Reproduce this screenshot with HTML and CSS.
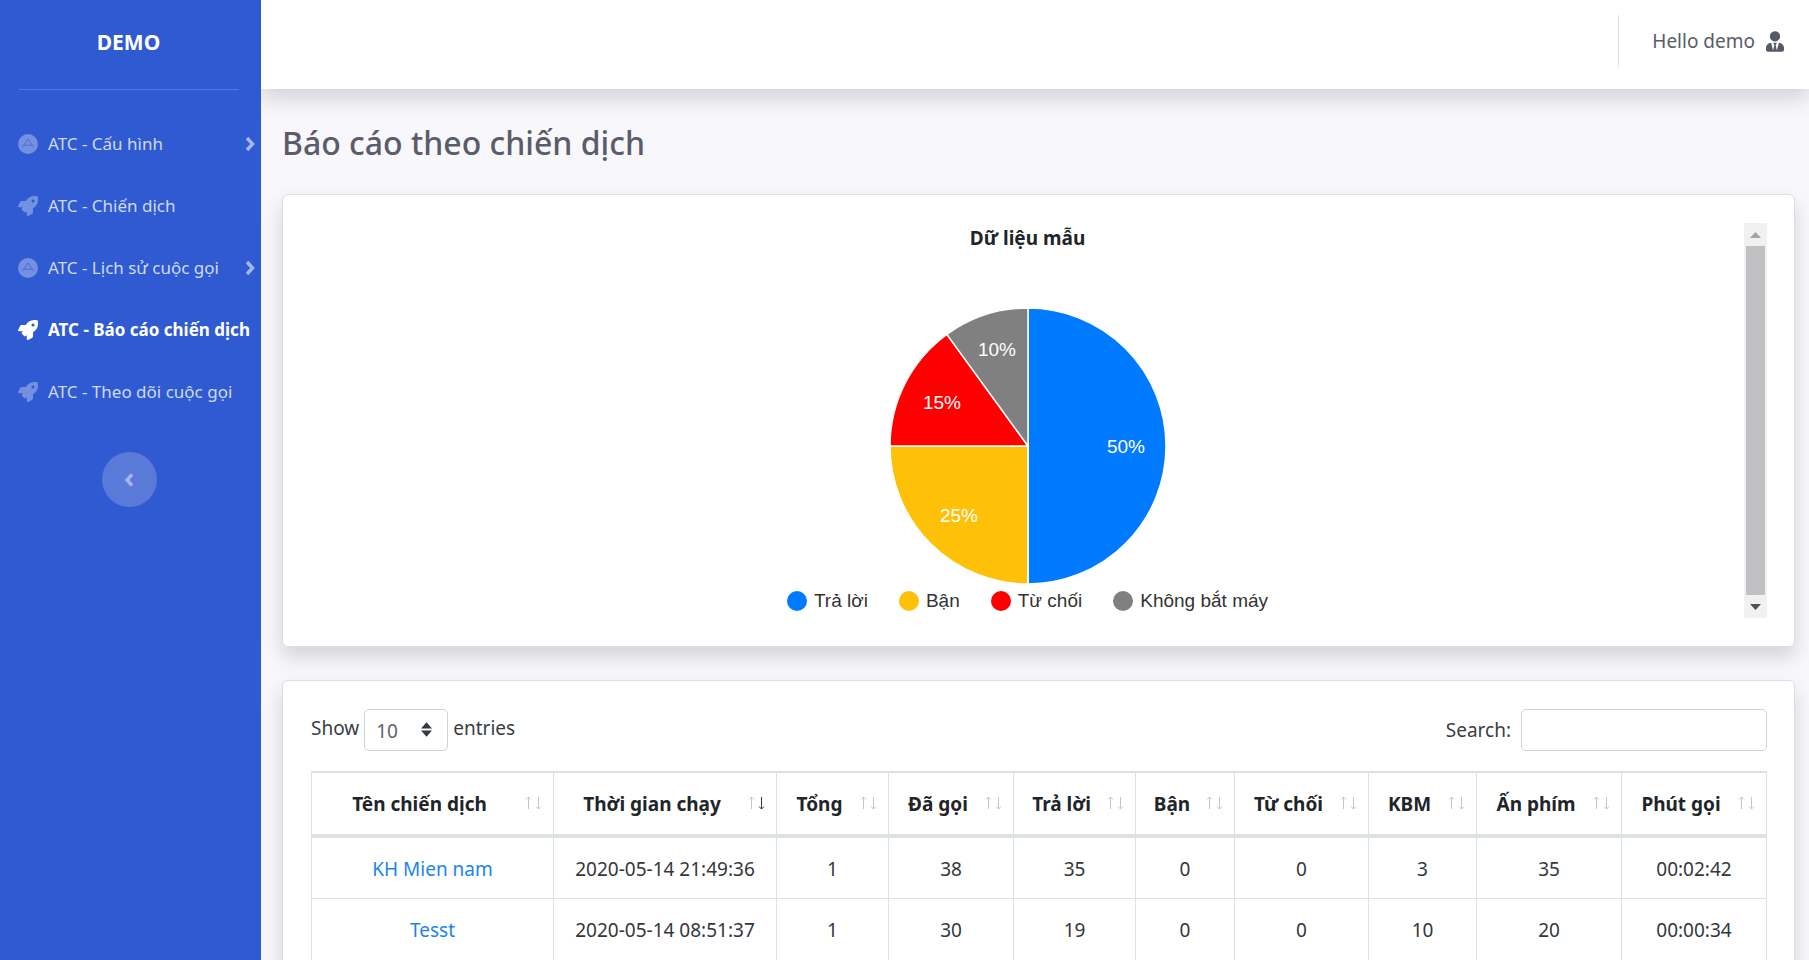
FILE: index.html
```html
<!DOCTYPE html>
<html lang="vi">
<head>
<meta charset="utf-8">
<meta name="viewport" content="width=device-width, initial-scale=1">
<title>Báo cáo theo chiến dịch</title>
<link rel="stylesheet" href="styles.css">
</head>
<body>
<svg class="sprite" aria-hidden="true">
  <symbol id="rocket" viewBox="0 0 512 512"><path d="M505.12 19.09c-1.19-5.53-6.66-11-12.21-12.19C460.72 0 435.51 0 410.41 0 307.18 0 245.27 55.2 199.05 128H94.84c-16.35.02-35.56 11.88-42.89 26.48L2.52 253.3A28.4 28.4 0 0 0 0 264a24 24 0 0 0 24 24h103.82l-22.48 22.47c-11.36 11.36-12.99 32.26 0 45.25l50.91 50.9c11.15 11.19 32.15 13.16 45.27 0L224 384.16V488a24 24 0 0 0 24 24 28.56 28.56 0 0 0 10.71-2.52l98.73-49.39c14.63-7.29 26.51-26.5 26.51-42.85V312.8C456.54 266.48 512 204.39 512 101.7c.08-25.2.08-50.4-6.88-82.61ZM384.04 168A40 40 0 1 1 424.05 128a40.02 40.02 0 0 1-40.01 40Z"/></symbol>
  <symbol id="circle-a" viewBox="0 0 20 20"><circle cx="10" cy="10" r="10"/><path d="M4 13.500 10 5l6 8.500M6 11.200h8" fill="none" stroke="#4a70d8" stroke-width="1"/></symbol>
  <symbol id="chevron-right" viewBox="0 0 10 16"><path d="m2 2 5.500 6L2 14" fill="none" stroke="currentColor" stroke-width="3.400"/></symbol>
  <symbol id="chevron-left" viewBox="0 0 10 16"><path d="M8 2.500 3 8l5 5.500" fill="none" stroke="currentColor" stroke-width="3.400"/></symbol>
  <symbol id="sort" viewBox="0 0 18 16"><g fill="none" stroke-width="1"><path d="M4.500 14V2M2 4.500 4.500 2 7 4.500"/><path stroke="currentColor" d="M14.500 2v12M12 11.500l2.500 2.500 2.500-2.500"/></g></symbol>
</svg>
<div class="layout">
  <aside class="sidebar">
    <a class="brand" href="#">DEMO</a>
    <hr class="rule">
    <nav class="menu">
      <a class="item" href="#"><svg class="icon"><use href="#circle-a"/></svg><span class="label">ATC - Cấu hình</span><svg class="chevron"><use href="#chevron-right"/></svg></a>
      <a class="item" href="#"><svg class="icon"><use href="#rocket"/></svg><span class="label">ATC - Chiến dịch</span></a>
      <a class="item" href="#"><svg class="icon"><use href="#circle-a"/></svg><span class="label">ATC - Lịch sử cuộc gọi</span><svg class="chevron"><use href="#chevron-right"/></svg></a>
      <a class="item active" href="#"><svg class="icon"><use href="#rocket"/></svg><span class="label">ATC - Báo cáo chiến dịch</span></a>
      <a class="item" href="#"><svg class="icon"><use href="#rocket"/></svg><span class="label">ATC - Theo dõi cuộc gọi</span></a>
    </nav>
    <button class="toggle" type="button" aria-label="Thu gọn"><svg class="chevron"><use href="#chevron-left"/></svg></button>
  </aside>
  <div class="page">
    <header class="topbar">
      <a class="user" href="#"><span>Hello demo</span>
        <svg class="user-icon" viewBox="0 0 448 512"><path d="M224 256c70.700 0 128-57.300 128-128S294.700 0 224 0 96 57.300 96 128s57.300 128 128 128zm95.800 32.600L272 480l-32-136 32-56h-96l32 56-32 136-47.800-191.400C56.900 292 0 350.300 0 422.400V464c0 26.500 21.500 48 48 48h352c26.500 0 48-21.500 48-48v-41.600c0-72.100-56.900-130.400-128.200-133.800z"/></svg>
      </a>
    </header>
    <main class="content">
      <h1 class="title">Báo cáo theo chiến dịch</h1>
      <section class="card chart-card">
        <figure class="chart">
          <figcaption class="chart-title">Dữ liệu mẫu</figcaption>
          <svg class="pie" viewBox="-138 -138 276 276" role="img" aria-label="Dữ liệu mẫu">
            <g stroke="#fff" stroke-width="1.500">
              <path fill="#007bff" d="M0 0V-138A138 138 0 0 1 0 138Z"/>
              <path fill="#ffc107" d="M0 0V138A138 138 0 0 1-138 0Z"/>
              <path fill="#f00" d="M0 0H-138A138 138 0 0 1-81.100-111.600Z"/>
              <path fill="#808080" d="M0 0-81.100-111.600A138 138 0 0 1 0-138Z"/>
            </g>
            <g class="pie-text">
              <text x="98" y="7">50%</text>
              <text x="-69" y="76">25%</text>
              <text x="-86" y="-37">15%</text>
              <text x="-31" y="-90">10%</text>
            </g>
          </svg>
          <ul class="legend">
            <li><i class="dot blue"></i>Trả lời</li>
            <li><i class="dot yellow"></i>Bận</li>
            <li><i class="dot red"></i>Từ chối</li>
            <li><i class="dot gray"></i>Không bắt máy</li>
          </ul>
        </figure>
        <div class="scrollbar" aria-hidden="true">
          <svg class="arrow" viewBox="0 0 23 23"><path fill="#a3a3a3" d="M6 15h11l-5.500-6z"/></svg>
          <div class="thumb"></div>
          <svg class="arrow" viewBox="0 0 23 23"><path fill="#505050" d="M6 9h11l-5.500 6z"/></svg>
        </div>
      </section>
      <section class="card table-card">
        <div class="controls">
          <div class="length">
            <label class="length-text" for="len">Show</label>
            <span class="select-wrap">
              <select id="len" class="field select"><option>10</option><option>25</option><option>50</option></select>
              <svg class="caret" viewBox="0 0 12 16"><path d="M6 0l6 7H0zM6 16l6-7H0z"/></svg>
            </span>
            <span class="length-text">entries</span>
          </div>
          <div class="search"><label for="q">Search:</label><input id="q" class="field input" type="search"></div>
        </div>
        <table class="table">
          <colgroup><col class="w-name"><col class="w-time"><col class="w-total"><col class="w-called"><col class="w-answer"><col class="w-busy"><col class="w-reject"><col class="w-kbm"><col class="w-press"><col class="w-min"></colgroup>
          <thead>
            <tr>
              <th>Tên chiến dịch<svg class="sort"><use href="#sort"/></svg></th>
              <th>Thời gian chạy<svg class="sort desc"><use href="#sort"/></svg></th>
              <th>Tổng<svg class="sort"><use href="#sort"/></svg></th>
              <th>Đã gọi<svg class="sort"><use href="#sort"/></svg></th>
              <th>Trả lời<svg class="sort"><use href="#sort"/></svg></th>
              <th>Bận<svg class="sort"><use href="#sort"/></svg></th>
              <th>Từ chối<svg class="sort"><use href="#sort"/></svg></th>
              <th>KBM<svg class="sort"><use href="#sort"/></svg></th>
              <th>Ấn phím<svg class="sort"><use href="#sort"/></svg></th>
              <th>Phút gọi<svg class="sort"><use href="#sort"/></svg></th>
            </tr>
          </thead>
          <tbody>
            <tr><td><a href="#">KH Mien nam</a></td><td>2020-05-14 21:49:36</td><td>1</td><td>38</td><td>35</td><td>0</td><td>0</td><td>3</td><td>35</td><td>00:02:42</td></tr>
            <tr><td><a href="#">Tesst</a></td><td>2020-05-14 08:51:37</td><td>1</td><td>30</td><td>19</td><td>0</td><td>0</td><td>10</td><td>20</td><td>00:00:34</td></tr>
          </tbody>
        </table>
      </section>
    </main>
  </div>
</div>
</body>
</html>
```
FILE: styles.css
```css
* { box-sizing: border-box; }
html { height: 100%; }
body {
  margin: 0;
  height: 100%;
  overflow: hidden;
  background: #f8f8fc;
  color: #212529;
  font: 19px/30px "Segoe UI", "Noto Sans", sans-serif;
}
a { color: inherit; text-decoration: none; }
.sprite { position: absolute; width: 0; height: 0; }
.layout { display: flex; height: 100%; }

.sidebar {
  display: flex;
  flex: 0 0 261px;
  flex-direction: column;
  background: #2f5ad1;
  color: #fff;
}
.brand {
  padding: 27px 4px 32px 0;
  text-align: center;
  font-size: 21px;
  font-weight: 700;
}
.rule { width: 220px; margin: 0 0 23px 19px; border: 0; border-top: 1px solid #5478db; }
.menu { display: flex; flex-direction: column; }
.item {
  display: flex;
  align-items: center;
  height: 62px;
  padding: 0 6px 0 18px;
  font-size: 17px;
  white-space: nowrap;
  color: #d0daf5;
}
.icon { flex: none; width: 20px; height: 20px; margin-right: 10px; fill: #7390e1; }
.active { color: #fff; font-weight: 700; }
.active .icon { fill: #fff; }
.chevron { width: 10px; height: 16px; color: #a6b8eb; }
.item .chevron { margin-left: auto; }
.toggle {
  display: grid;
  place-items: center;
  align-self: center;
  width: 55px;
  height: 55px;
  margin: 29px 3px 0 0;
  padding: 0;
  border: 0;
  border-radius: 50%;
  background: #5a7ada;
}

.page { flex: 1; min-width: 0; overflow: hidden; }
.topbar {
  display: flex;
  justify-content: flex-end;
  align-items: center;
  height: 89px;
  padding: 0 25px 7px 0;
  background: #fff;
  box-shadow: 0 10px 20px rgba(0, 0, 0, .15);
}
.user {
  display: flex;
  align-items: center;
  gap: 11px;
  height: 52px;
  padding-left: 33px;
  border-left: 1px solid #dddfe6;
  color: #5a5c69;
}
.user-icon { width: 18px; height: 21px; fill: #555968; }
.content { padding: 34px 14px 0 21px; }
.title { margin: 0 0 31px; font-size: 32px; line-height: 40px; font-weight: 500; color: #5a5c69; }
.card {
  margin-bottom: 33px;
  padding: 28px 27px 28px 28px;
  border: 1px solid #dcdee4;
  border-radius: 6px;
  background: #fff;
  box-shadow: 0 10px 20px rgba(0, 0, 0, .15);
}

.chart-card { display: flex; }
.chart {
  display: flex;
  flex: 1;
  flex-direction: column;
  align-items: center;
  margin: 0;
}
.chart-title { margin-bottom: 55px; font-weight: 700; }
.pie { width: 276px; height: 276px; }
.pie-text { fill: #fff; font: 19px "Liberation Sans", Arial, sans-serif; text-anchor: middle; }
.legend {
  display: flex;
  gap: 31px;
  margin: 2px 0 0;
  padding: 0;
  list-style: none;
  font: 19px/30px "Liberation Sans", Arial, sans-serif;
  color: #333;
}
.legend li { display: flex; align-items: center; gap: 7px; }
.dot { width: 20px; height: 20px; border-radius: 50%; }
.blue { background: #007bff; }
.yellow { background: #ffc107; }
.red { background: #f00; }
.gray { background: #808080; }
.scrollbar { display: flex; flex-direction: column; width: 23px; height: 395px; background: #f1f1f2; }
.arrow { display: block; width: 23px; height: 23px; }
.thumb { flex: 1; margin: 0 2px; background: #c1c1c3; }

.table-card { min-height: 400px; }
.controls { display: flex; justify-content: space-between; align-items: center; margin-bottom: 20px; }
.length, .search { display: flex; align-items: center; color: #3a3d42; }
.length { gap: 5px; }
.length-text { padding-bottom: 4px; }
.search { gap: 10px; }
.select-wrap { position: relative; display: flex; }
.field {
  height: 42px;
  border: 1px solid #ced2d8;
  border-radius: 5px;
  background: #fff;
  color: #5c6370;
  font: inherit;
}
.select { width: 84px; padding: 2px 11px 0; appearance: none; }
.input { width: 246px; padding: 0 10px; }
.caret { position: absolute; top: 13px; right: 16px; width: 11px; height: 15px; fill: #343a40; pointer-events: none; }
.table {
  width: calc(100% - 2px);
  border-collapse: collapse;
  table-layout: fixed;
  text-align: center;
}
.w-name { width: 242px; }
.w-time { width: 223px; }
.w-total { width: 112px; }
.w-called { width: 125px; }
.w-answer { width: 122px; }
.w-busy { width: 99px; }
.w-reject { width: 134px; }
.w-kbm { width: 108px; }
.w-press, .w-min { width: 145px; }
th, td { border: 1px solid #dee0e4; white-space: nowrap; }
th {
  position: relative;
  height: 64px;
  padding: 0 26px 0 0;
  border-top-width: 2px;
  border-bottom: 4px solid #dde3e3;
  font-weight: 700;
}
td { height: 62px; padding: 2px 0 0; color: #34373b; }
td a { color: #1c84ee; }
.sort { position: absolute; top: 22px; right: 11px; width: 18px; height: 16px; stroke: #c4c5c7; color: #c4c5c7; }
.desc { color: #343a40; }
```
